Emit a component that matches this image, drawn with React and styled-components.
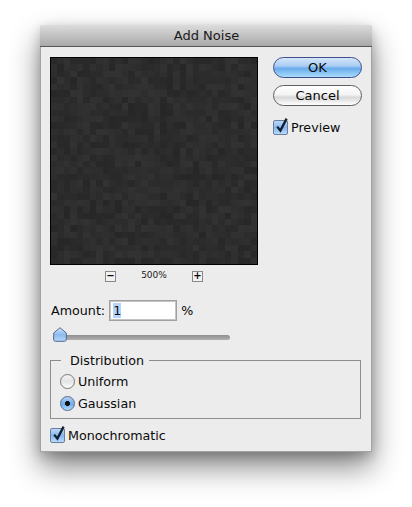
import React from "react";
import styled, { createGlobalStyle } from "styled-components";

const CELL = 6.5;
const CELLS = 32;

// small seeded generator so the noise looks the same on every load
function noiseCells() {
  let seed = 4711;
  const out = [];
  for (let y = 0; y < CELLS; y++) {
    for (let x = 0; x < CELLS; x++) {
      seed = (seed * 16807) % 2147483647;
      const grey = 39 + (seed % 12);
      out.push({ x, y, fill: `rgb(${grey},${grey},${grey + 1})` });
    }
  }
  return out;
}

const cells = noiseCells();

function NoisePreview() {
  return (
    <PreviewBox>
      <svg width="206" height="206" viewBox="0 0 208 208" shapeRendering="crispEdges">
        {cells.map((c) => (
          <rect key={`${c.x}-${c.y}`} x={c.x * CELL} y={c.y * CELL} width={CELL} height={CELL} fill={c.fill} />
        ))}
      </svg>
    </PreviewBox>
  );
}

function Check({ label }) {
  return (
    <CheckRow>
      <CheckBox>
        <svg width="17" height="19" viewBox="0 0 17 19">
          <path d="M4.2 9.6 L7.4 13.6 L13.6 1.6" fill="none" stroke="#10202f" strokeWidth="2.3" />
        </svg>
      </CheckBox>
      {label}
    </CheckRow>
  );
}

export default function App() {
  return (
    <>
      <GlobalStyle />
      <Page>
        <Dialog>
          <TitleBar>Add Noise</TitleBar>
          <Content>
            <TopRow>
              <PreviewColumn>
                <NoisePreview />
                <ZoomRow>
                  <ZoomButton>−</ZoomButton>
                  <ZoomLabel>500%</ZoomLabel>
                  <ZoomButton>+</ZoomButton>
                </ZoomRow>
              </PreviewColumn>
              <Side>
                <PrimaryButton>OK</PrimaryButton>
                <SecondaryButton>Cancel</SecondaryButton>
                <SideCheck>
                  <Check label="Preview" />
                </SideCheck>
              </Side>
            </TopRow>
            <AmountRow>
              Amount:
              <AmountField>
                <Selected>1</Selected>
              </AmountField>
              %
            </AmountRow>
            <SliderTrack>
              <SliderThumb>
                <svg width="14" height="15" viewBox="0 0 14 15">
                  <defs>
                    <linearGradient id="thumb" x1="0" y1="0" x2="0" y2="1">
                      <stop offset="0" stopColor="#d5e6f8" />
                      <stop offset="0.5" stopColor="#8cbcf0" />
                      <stop offset="1" stopColor="#b4d6fa" />
                    </linearGradient>
                  </defs>
                  <path d="M7 0.7 L13.3 6 V12.5 Q13.3 14.3 11.5 14.3 H2.5 Q0.7 14.3 0.7 12.5 V6 Z" fill="url(#thumb)" stroke="#56688c" />
                </svg>
              </SliderThumb>
            </SliderTrack>
            <Group>
              <GroupTitle>Distribution</GroupTitle>
              <RadioRow>
                <Radio />
                Uniform
              </RadioRow>
              <RadioRow>
                <Radio $on />
                Gaussian
              </RadioRow>
            </Group>
            <BottomCheck>
              <Check label="Monochromatic" />
            </BottomCheck>
          </Content>
        </Dialog>
      </Page>
    </>
  );
}

const GlobalStyle = createGlobalStyle`
  html, body {
    margin: 0;
    background: #fff;
    overflow: hidden;
  }
  * {
    box-sizing: border-box;
  }
`;

const Page = styled.div`
  width: 412px;
  height: 507px;
  padding: 25px 40px 0;
  font-family: "DejaVu Sans", sans-serif;
  font-size: 12.7px;
  color: #0a0a0a;
`;

const Dialog = styled.div`
  width: 332px;
  height: 427px;
  background: #ececec;
  border: 1px solid #a4a4a4;
  border-top: 0;
  border-radius: 4px 4px 0 0;
  box-shadow: 0 15px 30px rgba(0, 0, 0, 0.48), 0 4px 12px rgba(0, 0, 0, 0.2);
`;

const TitleBar = styled.div`
  height: 22px;
  margin: 0 -1px;
  border-radius: 4px 4px 0 0;
  border-bottom: 1px solid #555;
  background: linear-gradient(#dcdcdc, #a9a9a9);
  text-align: center;
  font-size: 13px;
  line-height: 22px;
  padding-left: 1px;
  color: #1a1a1a;
`;

const Content = styled.div`
  padding: 10px 10px 0 9px;
`;

const TopRow = styled.div`
  display: flex;
  gap: 15px;
`;

const PreviewColumn = styled.div`
  width: 208px;
`;

const PreviewBox = styled.div`
  width: 208px;
  height: 208px;
  border: 1px solid #000;
  line-height: 0;
`;

const ZoomRow = styled.div`
  display: flex;
  align-items: center;
  margin-top: 6px;
  padding-left: 55px;
`;

const ZoomButton = styled.div`
  width: 11px;
  height: 11px;
  border: 1px solid #888;
  background: #f2f2f2;
  font-size: 10px;
  line-height: 8px;
  text-align: center;
  font-weight: bold;
`;

const ZoomLabel = styled.div`
  width: 76px;
  text-align: center;
  font-size: 9px;
  line-height: 9px;
  margin-top: -3px;
  color: #222;
`;

const Side = styled.div`
  width: 89px;
  display: flex;
  flex-direction: column;
`;

const PillButton = styled.div`
  width: 89px;
  height: 21px;
  border-radius: 11px;
  text-align: center;
  font-size: 13px;
  line-height: 19px;
`;

const PrimaryButton = styled(PillButton)`
  border: 1px solid #3f4f8c;
  background: linear-gradient(#d4e6f9 0%, #a9cdf3 42%, #69abec 55%, #a8dcfb 100%);
`;

const SecondaryButton = styled(PillButton)`
  margin-top: 7px;
  border: 1px solid #5f5f5f;
  background: linear-gradient(#fff 0%, #f4f4f4 45%, #d8d8d8 60%, #fff 100%);
`;

const SideCheck = styled.div`
  margin-top: 13px;
`;

const CheckRow = styled.div`
  display: flex;
  align-items: center;
  gap: 3px;
  height: 16px;
`;

const CheckBox = styled.div`
  position: relative;
  width: 15px;
  height: 15px;
  border: 1px solid #6a7da0;
  border-radius: 2px;
  background: linear-gradient(#bcd8f6 0%, #85b7ee 50%, #b7dbfb 100%);
  svg {
    position: absolute;
    left: -1px;
    top: -4px;
  }
`;

const AmountRow = styled.div`
  display: flex;
  align-items: center;
  height: 21px;
  margin-top: 18px;
  padding-left: 1px;
`;

const AmountField = styled.div`
  width: 68px;
  height: 21px;
  margin: 0 4px 0 4px;
  padding: 2px 0 0 3px;
  border: 1px solid #a0a0a0;
  box-shadow: inset 0 0 0 1px #c4c4c4;
  background: #fff;
  line-height: 15px;
`;

const Selected = styled.span`
  display: inline-block;
  width: 8px;
  height: 15px;
  background: #b5d5fb;
  text-align: center;
`;

const SliderTrack = styled.div`
  position: relative;
  width: 177px;
  height: 5px;
  margin: 14px 0 0 3px;
  border-radius: 3px;
  background: linear-gradient(#8f8f8f, #b0b0b0);
`;

const SliderThumb = styled.div`
  position: absolute;
  left: 0;
  top: -8px;
  line-height: 0;
`;

const Group = styled.fieldset`
  width: 311px;
  height: 66px;
  margin: 13px 0 0 0;
  padding: 5px 0 0 9px;
  border: 1px solid #8e8e8e;
`;

const GroupTitle = styled.legend`
  margin-left: 1px;
  padding: 0 5px 0 9px;
  line-height: 15px;
`;

const RadioRow = styled.div`
  display: flex;
  align-items: center;
  gap: 3px;
  height: 16px;
  margin: 0 0 6px 0;
`;

const Radio = styled.div`
  width: 15px;
  height: 15px;
  border-radius: 50%;
  border: 1px solid ${(p) => (p.$on ? "#5a6c94" : "#777")};
  background: ${(p) =>
    p.$on
      ? "radial-gradient(circle, #111 0 2.2px, transparent 2.8px), linear-gradient(#b4d2f4, #6eaaea 55%, #b2dcfa)"
      : "linear-gradient(#f4f4f4, #e4e4e4 50%, #fff)"};
`;

const BottomCheck = styled.div`
  margin-top: 8px;
`;
